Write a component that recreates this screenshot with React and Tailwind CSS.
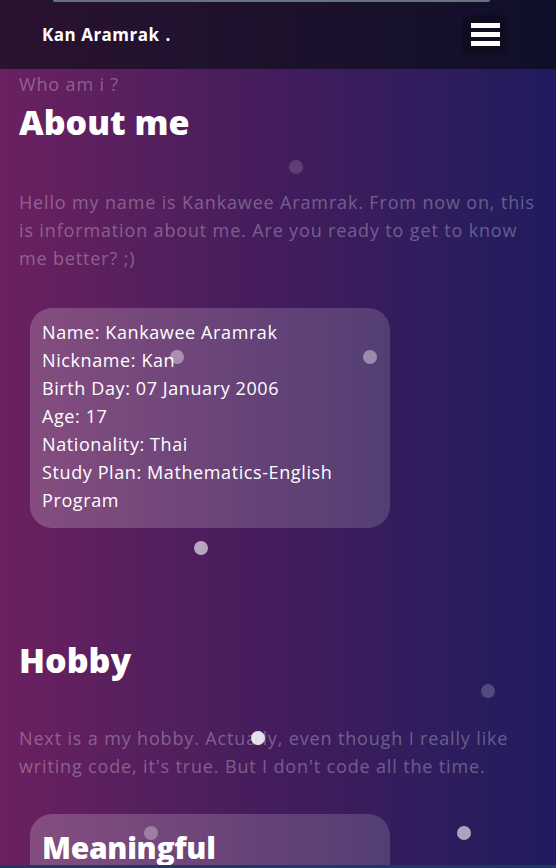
import React from 'react'

const dots = [
  { x: 296, y: 167, c: 'bg-white/15' },
  { x: 177, y: 357, c: 'bg-white/40' },
  { x: 370, y: 357, c: 'bg-white/40' },
  { x: 201, y: 548, c: 'bg-white/60' },
  { x: 488, y: 691, c: 'bg-white/20' },
  { x: 258, y: 738, c: 'bg-white/85' },
  { x: 151, y: 833, c: 'bg-white/30' },
  { x: 464, y: 833, c: 'bg-white/60' },
]

const info = [
  'Name: Kankawee Aramrak',
  'Nickname: Kan',
  'Birth Day: 07 January 2006',
  'Age: 17',
  'Nationality: Thai',
  'Study Plan: Mathematics-English Program',
]

export default function App() {
  return (
    <div className="relative h-[868px] w-full overflow-hidden bg-gradient-to-r from-[#6b2060] via-[#431c5c] to-[#1f1b5e] font-['Open_Sans',sans-serif] text-white">
      {/* Top bar */}
      <div className="absolute left-[53px] top-0 h-[2px] w-[437px] rounded-b bg-[#66737a]" />

      {/* Navbar */}
      <header className="flex h-[69px] items-center justify-between bg-gradient-to-r from-[#2a1230] to-[#0f0f29] pl-[42px] pr-[48px]">
        <span className="text-[17px] font-bold tracking-[0.5px]">Kan Aramrak <span className="ml-[1px]">.</span></span>
        <button className="flex h-[40px] w-[46px] flex-col items-center justify-center gap-[4px] rounded-md bg-black/20">
          <span className="h-[5px] w-[29px] bg-white" />
          <span className="h-[5px] w-[29px] bg-white" />
          <span className="h-[5px] w-[29px] bg-white" />
        </button>
      </header>

      <main className="px-[19px] tracking-[0.85px]">
        {/* About */}
        <p className="mt-[1px] text-[18px] leading-[28px] text-white/30">Who am i ?</p>
        <h1 className="mt-[4px] text-[34px] font-extrabold leading-[40px] tracking-[0px]">About me</h1>
        <p className="mt-[46px] text-[18px] leading-[28px] text-white/30">
          Hello my name is Kankawee Aramrak. From now on, this is information about me. Are you ready to get to know me better? ;)
        </p>

        <div className="ml-[11px] mt-[36px] w-[360px] rounded-[22px] bg-gradient-to-r from-white/20 to-white/15 px-[12px] pb-[14px] pt-[10px] tracking-[0.6px]">
          {info.map((line) => (
            <p key={line} className="text-[18px] leading-[28px]">{line}</p>
          ))}
        </div>

        {/* Hobby */}
        <h2 className="mt-[112px] text-[34px] font-extrabold leading-[40px] tracking-[0px]">Hobby</h2>
        <p className="mt-[44px] text-[18px] leading-[28px] text-white/30">
          Next is a my hobby. Actually, even though I really like writing code, it's true. But I don't code all the time.
        </p>

        <div className="ml-[11px] mt-[34px] w-[360px] rounded-t-[22px] bg-gradient-to-r from-white/20 to-white/15 px-[12px] pt-[14px]">
          <h3 className="text-[30px] font-extrabold leading-[40px] tracking-[-0.3px]">Meaningful</h3>
        </div>
      </main>

      {/* Floating particles */}
      {dots.map((d, i) => (
        <span
          key={i}
          className={`absolute h-[14px] w-[14px] -translate-x-1/2 -translate-y-1/2 rounded-full ${d.c}`}
          style={{ left: d.x, top: d.y }}
        />
      ))}

      <div className="absolute bottom-0 left-0 h-[3px] w-full bg-[#1d3a66]" />
    </div>
  )
}
